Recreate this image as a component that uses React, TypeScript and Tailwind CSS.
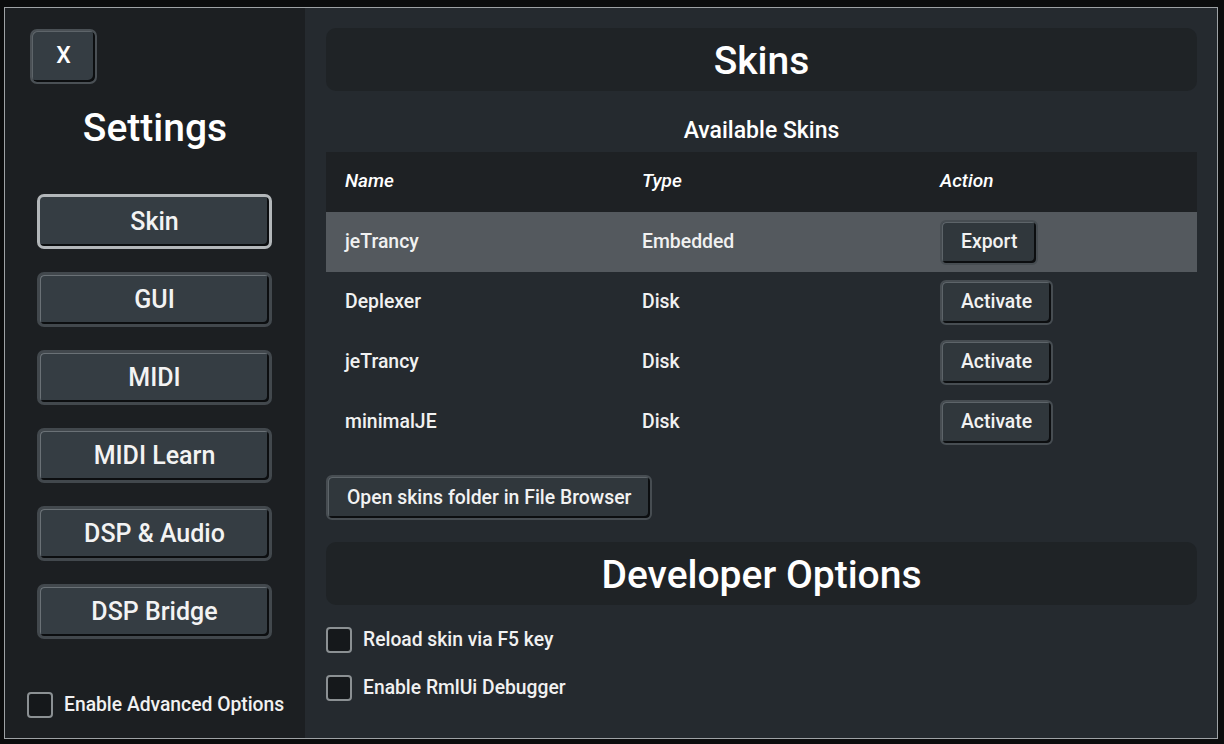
const skins = [
  { name: "jeTrancy", type: "Embedded", action: "Export", selected: true },
  { name: "Deplexer", type: "Disk", action: "Activate", selected: false },
  { name: "jeTrancy", type: "Disk", action: "Activate", selected: false },
  { name: "minimalJE", type: "Disk", action: "Activate", selected: false },
];

const menu = ["Skin", "GUI", "MIDI", "MIDI Learn", "DSP & Audio", "DSP Bridge"];

function Checkbox({ label }: { label: string }) {
  return (
    <label className="flex h-[26px] items-center gap-[11px]">
      <span className="h-[26px] w-[26px] rounded-[4px] border-2 border-[#8b9093] bg-[#15181b]" />
      <span className="text-[19.3px] font-medium text-[#f1f1f1]">{label}</span>
    </label>
  );
}

function SmallButton({ children }: { children: string }) {
  return (
    <button className="h-[45px] rounded-[6px] border-2 border-[#474d52] bg-[#30373c] px-[19px] text-[19.4px] font-medium text-[#f2f2f2] shadow-[inset_1px_1px_0_#5d6469,inset_-2px_-2px_0_#0c0e10]">
      {children}
    </button>
  );
}

export default function App() {
  return (
    <div
      className="h-[744px] w-[1224px] overflow-hidden bg-[#0b0c0d] pl-[4px] pt-[7px]"
      style={{ fontFamily: "Roboto, 'Noto Sans', sans-serif" }}
    >
      <div className="flex h-[732px] w-[1214px] border border-[#9ea2a5] bg-[#252a2f]">
        {/* sidebar */}
        <div className="flex w-[300px] flex-col bg-[#1c1f22]">
          <button className="ml-[25px] mt-[21px] h-[55px] w-[67px] rounded-[7px] border-2 border-[#4a5055] bg-[#353d43] text-[23px] font-medium text-white shadow-[inset_1px_1px_0_#5d6469,inset_-2px_-2px_0_#0c0e10]">
            X
          </button>
          <h1 className="mt-[24px] text-center text-[39px] font-medium leading-[40px] text-white">
            Settings
          </h1>
          <div className="ml-[32px] mt-[46px] flex flex-col gap-[23px]">
            {menu.map((m, i) => (
              <button
                key={m}
                className={`h-[55px] w-[235px] rounded-[7px] bg-[#353d43] text-[25px] font-medium text-[#f3f3f3] ${
                  i === 0
                    ? "border-[3px] border-[#b3b7ba] shadow-[inset_-2px_-2px_0_#0c0e10]"
                    : "border-[3px] border-[#42484d] shadow-[inset_1px_1px_0_#6a7176,inset_-2px_-2px_0_#0c0e10]"
                }`}
              >
                {m}
              </button>
            ))}
          </div>
          <div className="mb-[20px] ml-[22px] mt-auto">
            <Checkbox label="Enable Advanced Options" />
          </div>
        </div>

        {/* content */}
        <div className="flex flex-1 flex-col pl-[21px] pr-[20px] pt-[20px]">
          <div className="flex h-[63px] items-center justify-center rounded-[10px] bg-[#1f2326]">
            <h2 className="pt-[3px] text-[39px] font-medium text-white">Skins</h2>
          </div>
          <h3 className="mt-[26px] text-center text-[23px] font-medium leading-[28px] text-white">
            Available Skins
          </h3>
          <div className="mt-[7px]">
            <div className="grid h-[60px] grid-cols-[297px_298px_1fr] items-center bg-[#1e2124] pb-[2px] text-[19px] font-medium italic text-white">
              <span className="pl-[19px]">Name</span>
              <span className="pl-[19px]">Type</span>
              <span className="pl-[19px]">Action</span>
            </div>
            {skins.map((s, i) => (
              <div
                key={i}
                className={`grid h-[60px] grid-cols-[297px_298px_1fr] items-center text-[19.4px] font-medium text-[#f1f1f1] ${
                  s.selected ? "bg-[#54595e]" : ""
                }`}
              >
                <span className="pl-[19px]">{s.name}</span>
                <span className="pl-[19px]">{s.type}</span>
                <span className="pl-[19px]">
                  <SmallButton>{s.action}</SmallButton>
                </span>
              </div>
            ))}
          </div>
          <div className="mt-[23px]">
            <SmallButton>Open skins folder in File Browser</SmallButton>
          </div>
          <div className="mt-[22px] flex h-[63px] items-center justify-center rounded-[10px] bg-[#1f2326]">
            <h2 className="pt-[3px] text-[39px] font-medium text-white">Developer Options</h2>
          </div>
          <div className="mt-[22px] flex flex-col gap-[22px]">
            <Checkbox label="Reload skin via F5 key" />
            <Checkbox label="Enable RmlUi Debugger" />
          </div>
        </div>
      </div>
    </div>
  );
}
